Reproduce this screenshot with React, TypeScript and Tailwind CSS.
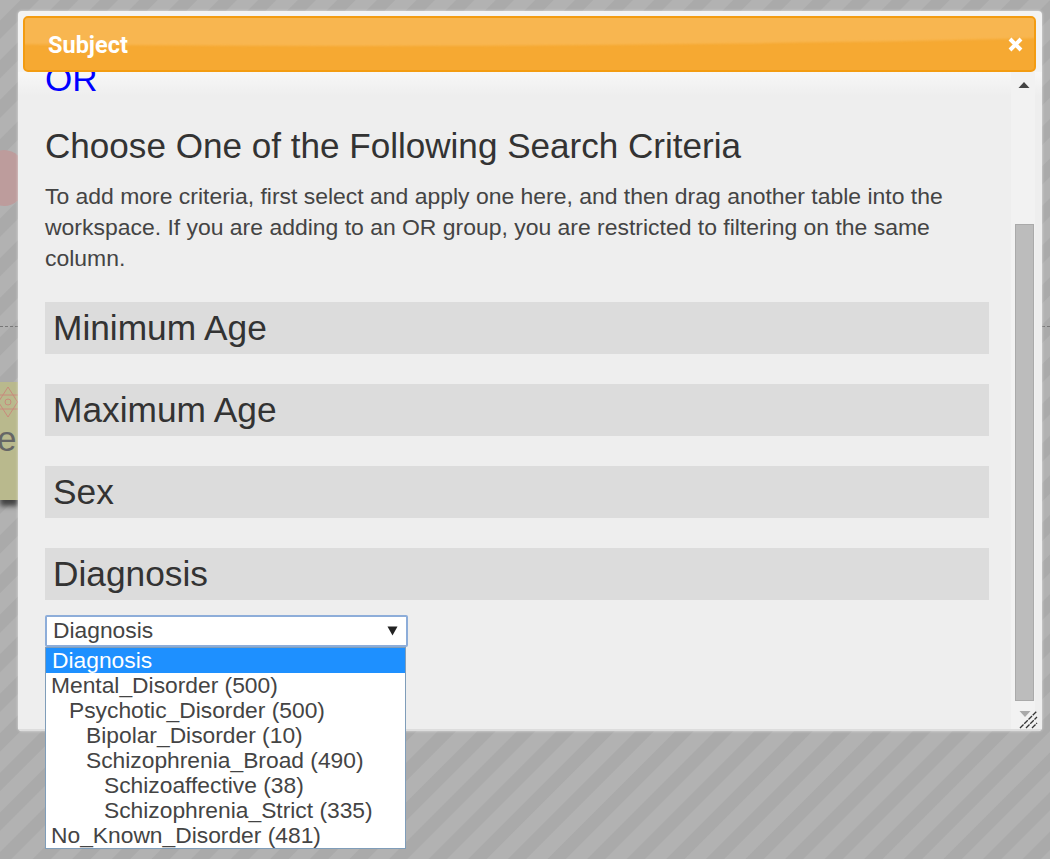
const sections = ['Minimum Age', 'Maximum Age', 'Sex', 'Diagnosis']

const options = [
  { label: 'Mental_Disorder (500)', indent: 'pl-[5px]' },
  { label: 'Psychotic_Disorder (500)', indent: 'pl-[23px]' },
  { label: 'Bipolar_Disorder (10)', indent: 'pl-[40px]' },
  { label: 'Schizophrenia_Broad (490)', indent: 'pl-[40px]' },
  { label: 'Schizoaffective (38)', indent: 'pl-[58px]' },
  { label: 'Schizophrenia_Strict (335)', indent: 'pl-[58px]' },
  { label: 'No_Known_Disorder (481)', indent: 'pl-[5px]' },
]

function Backdrop() {
  return (
    <div className="absolute inset-0 bg-[repeating-linear-gradient(135deg,#b2b2b2_0px,#b2b2b2_14px,#aaaaaa_15px,#aaaaaa_27px,#b2b2b2_28px)]">
      <div className="absolute left-0 top-[150px] h-[56px] w-[40px] -translate-x-[16px] rounded-full bg-[#bd9c9c]" />
      <div className="absolute left-0 top-[326px] w-full border-t border-dashed border-[#777]" />
      <div className="absolute left-0 top-[382px] h-[118px] w-[18px] bg-[#b9b98d] shadow-[0_6px_5px_#444]">
        <svg className="absolute left-0 top-0" width="18" height="40" viewBox="0 0 18 40" fill="none" stroke="#c98a7c" strokeWidth="1">
          <path d="M8 5 22 27H-6z" />
          <path d="M8 35 22 13H-6z" />
          <circle cx="8" cy="20" r="3" />
        </svg>
        <span className="absolute -left-[3px] top-[39px] text-[35px] leading-none text-[#666]">e</span>
      </div>
    </div>
  )
}

function Scrollbar() {
  return (
    <div className="flex w-[24px] shrink-0 flex-col items-center bg-[#f2f2f2] pl-[2px]">
      <svg className="mt-[9px] shrink-0" width="12" height="8" viewBox="0 0 12 8">
        <path d="M6 1 11.500 7H.5z" fill="#444" />
      </svg>
      <div className="mt-[135px] ml-[1px] h-[477px] w-[19px] shrink-0 border border-[#aaa] bg-[#bcbcbc]" />
      <div className="relative w-full flex-1">
        <svg className="absolute left-[6px] top-[9px]" width="20" height="19" viewBox="0 0 20 19">
          <path d="M.5 1h11L6 7z" fill="#aaa" />
          <path d="M1 18 18 1M7 18 18 7M13 18l5-5" stroke="#333" strokeWidth="1.300" strokeDasharray="5 1" fill="none" />
        </svg>
      </div>
    </div>
  )
}

function DiagnosisSelect() {
  return (
    <div className="relative mt-[15px] w-[363px] text-[22.800px] text-[#444]">
      <div className="flex h-[32px] items-center justify-between rounded-[2px] border-2 border-[#8dadd9] bg-white pb-[1px] pl-[6px] pr-[8px] leading-none">
        <span>Diagnosis</span>
        <svg width="11" height="10" viewBox="0 0 11 10">
          <path d="M.5.500h10L5.500 9.500z" fill="#222" />
        </svg>
      </div>
      <div className="absolute left-0 top-[32px] w-[361px] border border-[#7f9db9] bg-white leading-[25px] whitespace-nowrap">
        <div className="bg-[#1e90ff] pl-[6px] text-white">Diagnosis</div>
        {options.map((o) => (
          <div key={o.label} className={o.indent}>{o.label}</div>
        ))}
      </div>
    </div>
  )
}

export default function App() {
  return (
    <div className="relative h-[859px] w-[1050px] overflow-hidden font-['Liberation_Sans',sans-serif]">
      <Backdrop />

      {/* dialog */}
      <div className="absolute left-[18px] top-[11px] flex h-[720px] w-[1024px] flex-col rounded-[4px] bg-[#f3f3f3] shadow-[inset_0_-2px_0_#dddddd,0_0_3px_rgba(255,255,255,0.6)]">
        <div className="h-[61px] shrink-0" />
        <div className="flex min-h-0 flex-1 mb-[2px] pr-[7px] bg-[linear-gradient(to_bottom,#f7f7f7_0px,#eeeeee_24px)]">
          <div className="min-w-0 flex-1 pl-[27px] pr-[22px]">
            <div className="-mt-[6px] text-[35px] leading-[26px] text-[#0000ff]">OR</div>
            <h2 className="mt-[31px] text-[35.100px] leading-[46px] text-[#333]">Choose One of the Following Search Criteria</h2>
            <p className="mt-[12px] text-[22.950px] leading-[31px] text-[#444]">
              To add more criteria, first select and apply one here, and then drag another table into the workspace. If you are adding to an OR group, you are restricted to filtering on the same column.
            </p>
            <div className="mt-[28px] flex flex-col gap-[30px]">
              {sections.map((s) => (
                <div key={s} className="flex h-[52px] items-center bg-[#dcdcdc] pl-[8px] text-[35.300px] text-[#333]">{s}</div>
              ))}
            </div>
            <DiagnosisSelect />
          </div>
          <Scrollbar />
        </div>
      </div>

      {/* orange title bar sits over the scrolling content */}
      <div className="absolute left-[23px] top-[16px] flex h-[56px] w-[1013px] items-center justify-between overflow-hidden rounded-[5px] border-2 border-[#f39c12] bg-[#f6a932] pl-[23px] pr-[11px]">
        <div className="absolute -left-[1675px] -top-[232px] h-[260px] w-[4000px] rounded-[50%] bg-[#f8b650] blur-[1px]" />
        <span className="relative pt-[3px] font-['Roboto',sans-serif] text-[23.500px] font-bold text-white">Subject</span>
        <svg className="relative" width="15" height="15" viewBox="0 0 15 15">
          <path d="M2 2l11 11M13 2 2 13" stroke="#fff" strokeWidth="4" />
        </svg>
      </div>
    </div>
  )
}
